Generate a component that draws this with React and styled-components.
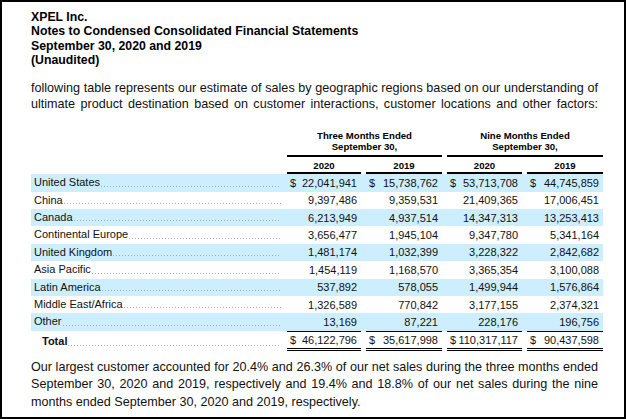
import React from 'react';
import styled, { createGlobalStyle } from 'styled-components';

const GlobalStyle = createGlobalStyle`
  html, body {
    margin: 0;
    padding: 0;
    background: #ffffff;
  }
  body {
    font-family: "Liberation Sans", Arial, sans-serif;
    color: #111;
  }
`;

const Page = styled.div`
  box-sizing: border-box;
  width: 626px;
  height: 419px;
  border: 2px solid #000;
  background: #fff;
  padding: 8px 21px 0 29px;
  overflow: hidden;
`;

const Heading = styled.div`
  font-size: 12.3px;
  line-height: 14.3px;
  font-weight: 700;
  color: #000;
`;

const Para = styled.p`
  width: 567px;
  margin: ${({ $top }) => $top};
  font-size: 12.6px;
  line-height: ${({ $lh }) => $lh};
  text-align: justify;
  text-align-last: ${({ $last }) => $last};
  color: #111;
`;

const Table = styled.div`
  display: flex;
  flex-direction: column;
  margin-top: 18px;
  width: 572px;
`;

const Row = styled.div`
  display: grid;
  grid-template-columns: 251px 74px 76px 75px 76px;
  column-gap: 5px;
  align-items: center;
  height: ${({ $h }) => $h || '17.4px'};
  background: ${({ $blue }) => ($blue ? '#cceeff' : 'transparent')};
`;

const HeadRow = styled.div`
  display: grid;
  grid-template-columns: 251px 74px 76px 75px 76px;
  column-gap: 5px;
  align-items: end;
`;

const GroupHead = styled.div`
  grid-column: span 2;
  text-align: center;
  font-size: 9.6px;
  line-height: 11px;
  font-weight: 700;
  color: #000;
  padding-bottom: 3px;
  border-bottom: 2px solid #000;
`;

const YearHead = styled.div`
  text-align: center;
  font-size: 9.6px;
  line-height: 11px;
  font-weight: 700;
  color: #000;
  padding: 3px 0 1px;
  border-bottom: 2px solid #000;
`;

const LabelCell = styled.div`
  display: flex;
  align-items: flex-end;
  height: 100%;
  box-sizing: border-box;
  padding: 0 0 0 ${({ $indent }) => $indent};
  font-size: 11px;
  font-weight: ${({ $bold }) => ($bold ? 700 : 400)};
  line-height: 17.4px;
  white-space: nowrap;
`;

const Leader = styled.span`
  flex: 1;
  height: 1px;
  margin: 0 1px 5px 1px;
  background-image: linear-gradient(to right, #adadad 1px, transparent 1px);
  background-size: 3px 1px;
  background-repeat: repeat-x;
`;

const Amount = styled.div`
  display: flex;
  justify-content: space-between;
  align-items: center;
  height: 100%;
  box-sizing: border-box;
  padding: 0 4px 0 3px;
  font-size: 11px;
  white-space: nowrap;
  border-top: ${({ $total }) => ($total ? '1px solid #000' : 'none')};
  border-bottom: ${({ $total }) => ($total ? '3px double #000' : 'none')};
`;

const rows = [
  ['United States', '22,041,941', '15,738,762', '53,713,708', '44,745,859'],
  ['China', '9,397,486', '9,359,531', '21,409,365', '17,006,451'],
  ['Canada', '6,213,949', '4,937,514', '14,347,313', '13,253,413'],
  ['Continental Europe', '3,656,477', '1,945,104', '9,347,780', '5,341,164'],
  ['United Kingdom', '1,481,174', '1,032,399', '3,228,322', '2,842,682'],
  ['Asia Pacific', '1,454,119', '1,168,570', '3,365,354', '3,100,088'],
  ['Latin America', '537,892', '578,055', '1,499,944', '1,576,864'],
  ['Middle East/Africa', '1,326,589', '770,842', '3,177,155', '2,374,321'],
  ['Other', '13,169', '87,221', '228,176', '196,756'],
];

const totals = ['46,122,796', '35,617,998', '110,317,117', '90,437,598'];

const App = () => (
  <>
    <GlobalStyle />
    <Page>
      <Heading>
        XPEL Inc.
        <br />
        Notes to Condensed Consolidated Financial Statements
        <br />
        September 30, 2020 and 2019
        <br />
        (Unaudited)
      </Heading>

      <Para $top="13px 0 0 0" $lh="16px" $last="justify">
        following table represents our estimate of sales by geographic regions based on our understanding of
        ultimate product destination based on customer interactions, customer locations and other factors:
      </Para>

      <Table>
        <HeadRow>
          <div />
          <GroupHead>
            Three Months Ended
            <br />
            September 30,
          </GroupHead>
          <GroupHead>
            Nine Months Ended
            <br />
            September 30,
          </GroupHead>
        </HeadRow>
        <HeadRow>
          <div />
          <YearHead>2020</YearHead>
          <YearHead>2019</YearHead>
          <YearHead>2020</YearHead>
          <YearHead>2019</YearHead>
        </HeadRow>

        {rows.map(([label, ...vals], i) => (
          <Row key={label} $blue={i % 2 === 0}>
            <LabelCell $indent="3px">
              {label}
              <Leader />
            </LabelCell>
            {vals.map((v, j) => (
              <Amount key={j}>
                <span>{i === 0 ? '$' : ''}</span>
                <span>{v}</span>
              </Amount>
            ))}
          </Row>
        ))}

        <Row $h="20px">
          <LabelCell $indent="11px" $bold>
            Total
            <Leader />
          </LabelCell>
          {totals.map((v, j) => (
            <Amount key={j} $total>
              <span>$</span>
              <span>{v}</span>
            </Amount>
          ))}
        </Row>
      </Table>

      <Para $top="8px 0 0 0" $lh="17.5px" $last="left">
        Our largest customer accounted for 20.4% and 26.3% of our net sales during the three months ended
        September 30, 2020 and 2019, respectively and 19.4% and 18.8% of our net sales during the nine
        months ended September 30, 2020 and 2019, respectively.
      </Para>
    </Page>
  </>
);

export default App;
